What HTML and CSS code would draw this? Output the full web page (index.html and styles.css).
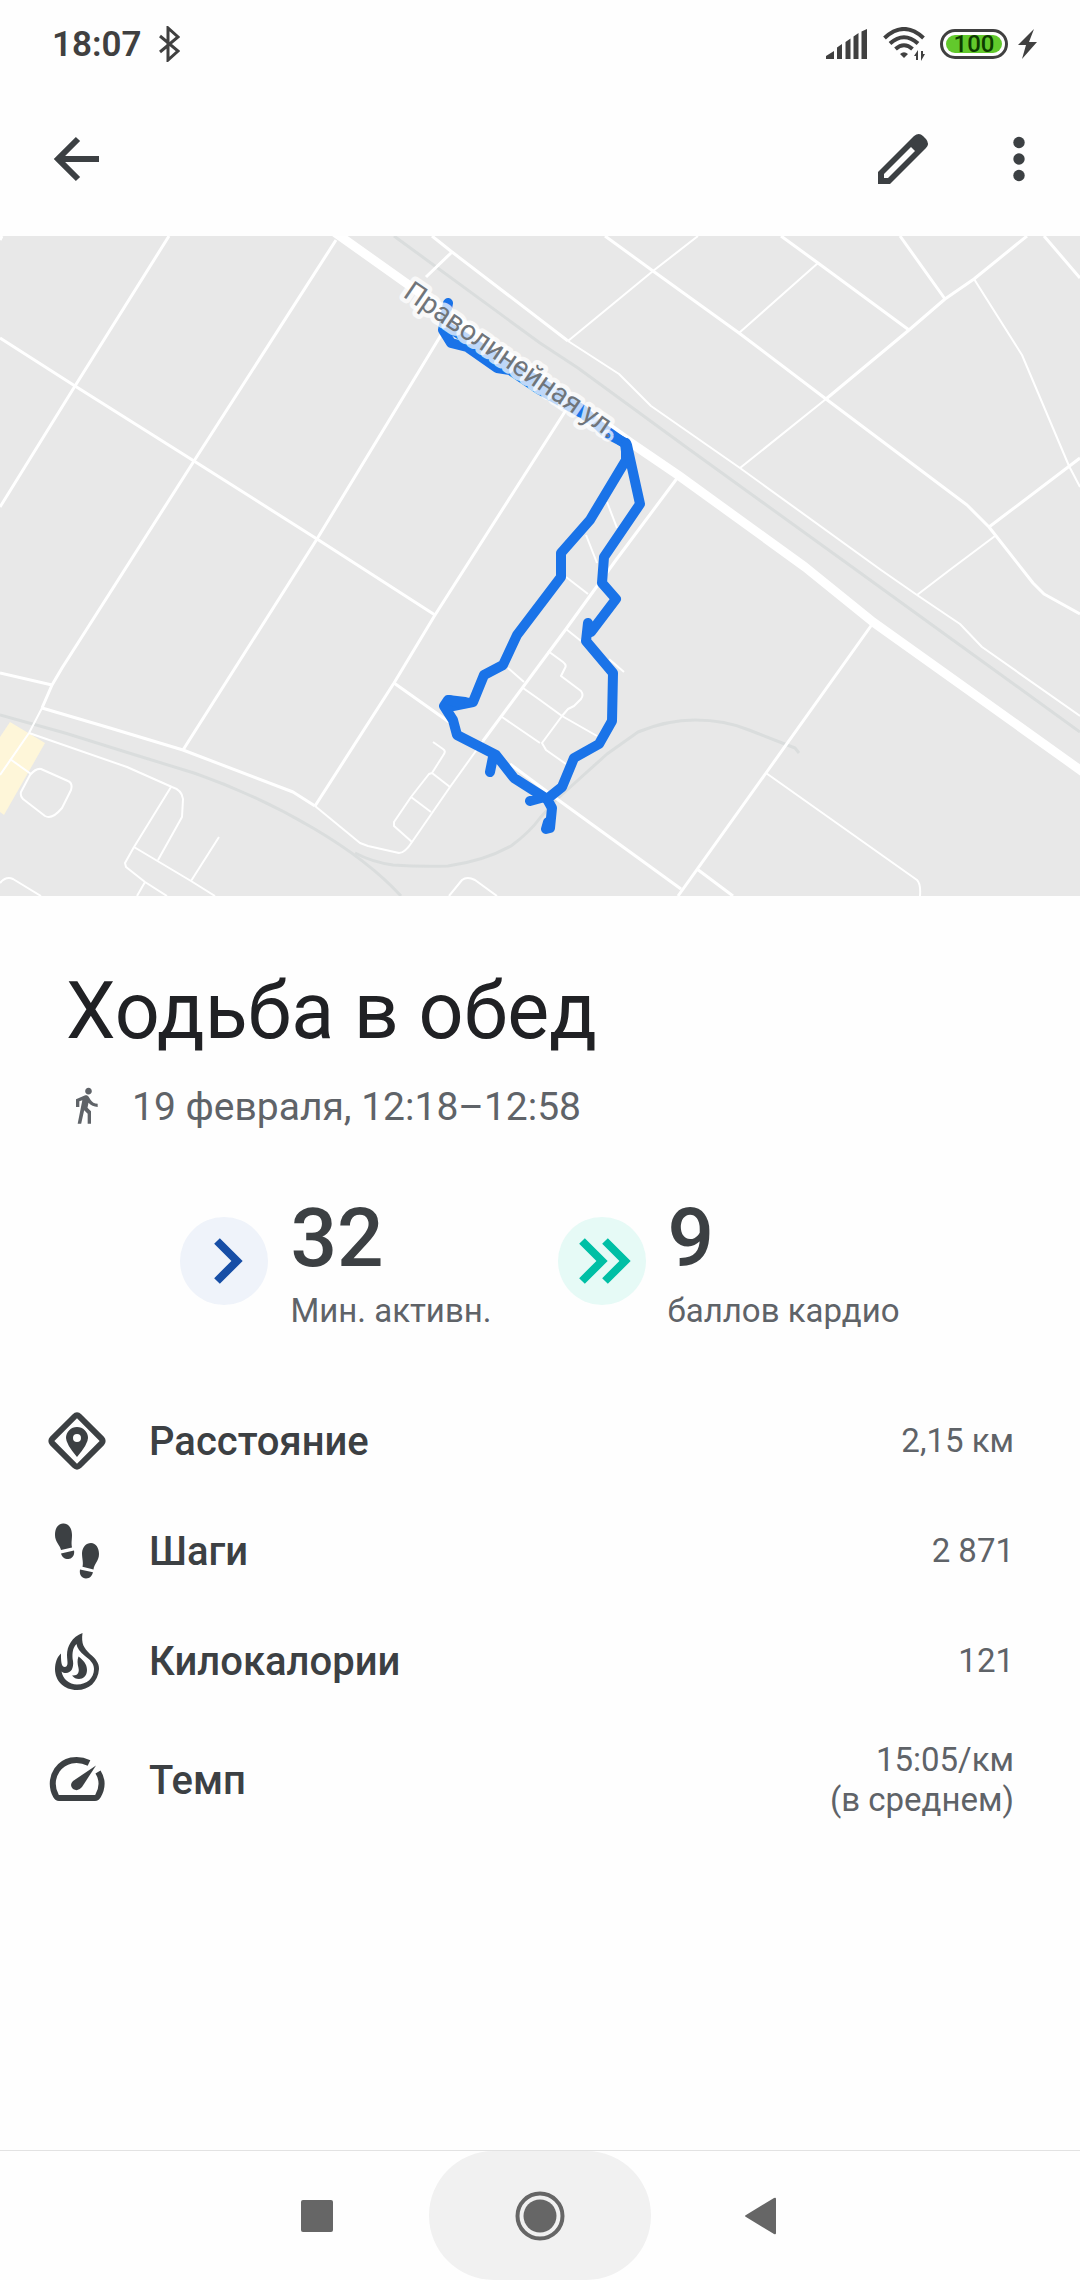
FILE: index.html
```html
<!DOCTYPE html>
<html lang="ru">
<head>
    <meta charset="utf-8">
    <meta name="viewport" content="width=device-width, initial-scale=1">
    <title>Ходьба в обед</title>
    <link rel="stylesheet" href="styles.css">
</head>
<body>
    <div class="status-bar">
        <div class="status-left">
            <span class="clock">18:07</span>
            <svg class="bluetooth" viewBox="0 0 22 36" aria-hidden="true"><path d="M2 10l18 15-10 9V2l10 9L2 26" /></svg>
        </div>
        <div class="status-right">
            <svg class="signal" viewBox="0 0 42 30" aria-hidden="true">
                <path d="M0 30v-3l8-5v8zM11 30V18.500l5-3.500v15zM19.500 30V13l5-3.500V30zM27.500 30V7.500l5-3.500v26zM35.500 30V2.500L41 0v30z" />
            </svg>
            <svg class="wifi" viewBox="0 0 42 34" aria-hidden="true">
                <path class="waves" d="M1.500 11Q21-7 40.500 11M7 16.500Q21 4 35 16.500M12.500 22Q21 14.500 29.500 22" />
                <path d="M17 27q4-3.500 8 0l-4 4zM35 23v10h-2v-4h-2zM38 34V24h2v3h2z" />
            </svg>
            <div class="battery"><span>100</span></div>
            <svg class="bolt" viewBox="0 0 20 30" aria-hidden="true"><path d="M16 0L0 16h8L4 30l15-17h-8z" /></svg>
        </div>
    </div>

    <header class="app-bar">
        <button class="icon-button" aria-label="Назад">
            <svg viewBox="0 0 66 66"><path class="line" d="M55 33H16M34 13L14 33l20 20" /></svg>
        </button>
        <div class="actions">
            <button class="icon-button" aria-label="Изменить">
                <svg viewBox="0 0 66 66"><path fill-rule="evenodd" d="M8 46L44 10q5-4 9 0l3 3q4 5 0 9L20 58H8zM14 48v4h4l27-27-4-4z" /></svg>
            </button>
            <button class="icon-button" aria-label="Ещё">
                <svg viewBox="0 0 66 66"><circle cx="33" cy="16.500" r="5.700" /><circle cx="33" cy="33" r="5.700" /><circle cx="33" cy="49.500" r="5.700" /></svg>
            </button>
        </div>
    </header>

    <svg class="map" viewBox="0 236 1080 660" role="img" aria-label="Маршрут на карте">
        <path class="area" d="M10 722L45 743 4 815l-4-3v-75z" />

        <!-- railways -->
        <path class="rail" d="M394 236L540 343 578 368 686 447 848 564 957 643 1080 732" />
        <path class="rail" d="M0 715L65 733 129 753 194 773Q257 795 313 828T401 896" />
        <path class="rail" d="M355 853Q372 862 393 865 420 867 448 866 484 861 511 846 530 832 540 818L557 799 607 754 638 732Q667 720 695 720 725 720 749 730L795 748 799 753" />

        <!-- lanes -->
        <path class="lane" d="M315 806L360 843 368 846 399 853Q405 853 412 842L450 787 483 741" />
        <path class="lane" d="M433 742L443 749Q446 751 444 754L432 773 429 774 411 797 394 822V826L412 842M432 773L450 787M411 797L431 812" />
        <path class="lane" d="M42 708L29 733 0 775M29 733L127 767 172 787Q182 790 183 799L182 817 158 860M171 787L134 847 125 863 126 867 145 882 167 896M134 847L191 881 215 896M191 881L219 837M145 882L137 896" />
        <path class="lane" d="M41 769L68 781Q73 783 71 790L62 808Q52 820 45 816L23 799Q20 796 21 792L30 775Q36 768 41 769zM10 759L31 774" />
        <path class="lane" d="M0 883Q6 876 13 879L41 896M449 896L462 880Q467 876 475 880L497 896" />
        <path class="lane" d="M548 651L563 662Q567 665 565 668L561 676 581 691Q584 695 581 699L574 706 568 709 562 716 542 743 546 750 566 764M523 688L540 700 562 716 597 736M502 717L540 743M508 668L524 682" />
        <path class="lane" d="M566 577L588 594M566 629L581 641M609 659L624 672M607 502L617 528M586 535L597 563" />
        <path class="lane" d="M698 236L653 271 568 341M818 263L739 333M826 399L740 468M995 536L951 569 917 595M974 279L1022 355 1069 466 1080 487" />
        <path class="lane" d="M766 773L917 880Q921 884 920 896M568 341L619 374 651 406 740 468 881 570 917 595 960 624 982 647 1080 716" />

        <!-- streets -->
        <path class="street" d="M2 236L0 240M169 236L75 386 0 507M336 240L194 461 62 668 52 685 42 708M441 335L317 539 183 750M566 410L435 615 394 683 315 806" />
        <path class="street" d="M0 338L75 386 194 461 317 539 435 615M0 673L52 685M42 708L110 728 183 750 293 792 315 806" />
        <path class="street" d="M678 477L616 560 566 629 483 741M394 683L449 722M510 764L557 799 681 889M873 623L766 773 678 896M697 869L733 896" />
        <path class="street" d="M605 236L653 271 739 333 826 399 967 505 989 527 1033 583 1044 594 1080 614M781 236L818 263 909 330" />
        <path class="street" d="M1027 236L974 279 945 299 909 330 826 399M900 236L945 299M1044 236L1080 278M1080 458L989 527" />
        <path class="street" d="M432 236L452 252 568 341M452 252L426 277" />
        <path class="avenue" d="M330 229L631 443 678 475 805 567 873 622 1090 777" />

        <!-- walked route -->
        <path class="route" d="M448 303L443 330 451 343 467 347 497 368 510 370 540 390 583 414 624 443" />
        <path class="route" d="M445 325L470 341 500 360 540 382 583 410 606 433 625 443 627 460" />
        <path class="route" d="M626 443V460L590 520 561 553V577L517 635 503 665 484 675 473 702 448 707M465 702L448 700 444 706 453 720 457 735 496 755 514 778 547 799M490 772L493 757M530 801L541 798" />
        <path class="route" d="M449 700L460 703" />
        <path class="route" d="M627 445L640 504 604 557 602 583 616 599 591 632M588 623L586 641 613 673 612 721 599 744 574 758 562 787 547 799 552 808 550 828 546 829 548 822" />

        <text class="street-name" transform="translate(402 296) rotate(34.500)">Праволинейная ул.</text>
    </svg>

    <main>
        <h1>Ходьба в обед</h1>
        <p class="date">
            <svg viewBox="0 1 24 24" aria-hidden="true"><path d="M13.500 5.500c1.100 0 2-.9 2-2s-.9-2-2-2-2 .9-2 2 .9 2 2 2zM9.800 8.900L7 23h2.100l1.800-8 2.100 2v6h2v-7.500l-2.100-2 .6-3C14.800 12 16.800 13 19 13v-2c-1.900 0-3.500-1-4.300-2.400l-1-1.600c-.4-.6-1-1-1.700-1-.3 0-.5.1-.8.1L6 8.300V13h2V9.600l1.800-.7" /></svg>
            19 февраля, 12:18–12:58
        </p>

        <div class="scores">
            <div class="score">
                <svg class="badge move" viewBox="0 0 88 88" aria-hidden="true"><circle cx="44" cy="44" r="44" /><path d="M37 24L57 44 37 64" /></svg>
                <div>
                    <div class="number">32</div>
                    <div class="caption">Мин. активн.</div>
                </div>
            </div>
            <div class="score">
                <svg class="badge cardio" viewBox="0 0 88 88" aria-hidden="true"><circle cx="44" cy="44" r="44" /><path d="M24 24L44 44 24 64M47 24L67 44 47 64" /></svg>
                <div>
                    <div class="number">9</div>
                    <div class="caption">баллов кардио</div>
                </div>
            </div>
        </div>

        <dl class="metrics">
            <div class="metric">
                <svg viewBox="0 0 66 66" aria-hidden="true">
                    <rect class="line" x="14" y="14" width="38" height="38" rx="3" transform="rotate(45 33 33)" />
                    <path fill-rule="evenodd" d="M33 49Q22 36 22 30A11 11 0 0 1 44 30Q44 36 33 49zM33 26a4 4 0 1 0 0 8 4 4 0 0 0 0-8z" />
                </svg>
                <dt>Расстояние</dt>
                <dd>2,15 км</dd>
            </div>
            <div class="metric">
                <svg viewBox="0 0 66 66" aria-hidden="true">
                    <path d="M19 5.500C25 5 28 11 28 17 28 22 27 25 28 29.500L17 32C16 27 11 24 11 17 11 10 14 6 19 5.500zM17 35.500L30 32.500C31 37 28 41 24.500 41 20 41 18 39 17 35.500z" />
                    <path d="M47 25C52 25 55 30 55 36 55 43 50 46 49.500 51.500L38.500 48.700C39.500 44 38 41 38 35 38.500 29 42 25 47 25zM36 51.500L49 54.300C48 58 46 60.500 42 60.500 38 60.500 35 57 36 51.500z" />
                </svg>
                <dt>Шаги</dt>
                <dd>2 871</dd>
            </div>
            <div class="metric">
                <svg viewBox="0 0 66 66" aria-hidden="true">
                    <path fill-rule="evenodd" d="M38.500 5C37 16 40 20 46 26 52 31 55 35 55 41 54 54 45 62 33 62 20 62 11 53 11 41 11 35 13 29 17 25.500 17 33 17 39 21 39 25 38 23 33 23 27 23 18 28 9 38.500 5zM32.500 16C28 20 28 28 29 33 30 40 27 45 22 45 20 45 19 44.500 17.500 43.500 19 51 25 56.500 33 56.500 43 56.500 50 50 50 41 50 35 45 31 41 28 36 24 33 20 32.500 16z" />
                    <path d="M34.500 28.500C39 32 43 36 43 42 43 48 39 51 35 51 32 51 30 50 28 47.500 34 48 35.500 44 34.500 40 33.500 36 33 32 34.500 28.500z" />
                </svg>
                <dt>Килокалории</dt>
                <dd>121</dd>
            </div>
            <div class="metric">
                <svg viewBox="0 0 66 66" aria-hidden="true">
                    <path class="line" d="M45 16C33 10 20 13 13 23 7 32 8 42 12 49Q13 51 15 51H51Q53 51 54 49C58 42 59 33 54 25" />
                    <path d="M52 18.500L38 40Q34 45 29 42 25 38 29 34z" />
                </svg>
                <dt>Темп</dt>
                <dd>15:05/км<br>(в среднем)</dd>
            </div>
        </dl>
    </main>

    <nav class="nav-bar">
        <button aria-label="Недавние"><svg viewBox="0 0 50 50"><rect x="8" y="9" width="32" height="32" rx="2" /></svg></button>
        <button class="pressed" aria-label="Домой"><svg viewBox="0 0 50 50"><circle class="ring" cx="25" cy="25" r="22.500" /><circle cx="25" cy="25" r="16.500" /></svg></button>
        <button aria-label="Назад"><svg viewBox="0 0 50 50"><path d="M9 24L37 7q2-1 2 1v34q0 2-2 1L9 26q-2-1 0-2z" /></svg></button>
    </nav>
</body>
</html>
```
FILE: styles.css
```css
* {
    box-sizing: border-box;
}

body {
    margin: 0;
    min-height: 100vh;
    display: flex;
    flex-direction: column;
    background: #fefefe;
    color: #3c4043;
    font-family: Roboto, "Noto Sans", sans-serif;
}

button {
    padding: 0;
    border: none;
    background: none;
    color: inherit;
    cursor: pointer;
}

svg {
    display: block;
    flex: none;
    fill: currentColor;
}

.line {
    fill: none;
    stroke: currentColor;
    stroke-width: 6;
}

/* status bar */
.status-bar {
    display: flex;
    justify-content: space-between;
    align-items: center;
    height: 88px;
    padding: 0 42px 0 52px;
    color: #404040;
}

.status-left,
.status-right {
    display: flex;
    align-items: center;
}

.status-left {
    gap: 16px;
}

.status-right {
    gap: 15px;
}

.clock {
    font-size: 35px;
    font-weight: 600;
}

.bluetooth {
    width: 22px;
    height: 36px;
    fill: none;
    stroke: currentColor;
    stroke-width: 3;
}

.signal {
    width: 42px;
    height: 30px;
}

.wifi {
    width: 42px;
    height: 34px;
}

.waves {
    fill: none;
    stroke: currentColor;
    stroke-width: 4;
}

.battery {
    width: 68px;
    height: 30px;
    padding: 3px;
    border: 3px solid #404040;
    border-radius: 15px;
}

.battery span {
    display: block;
    border-radius: 9px;
    background: #62c92c;
    color: #0d3b00;
    font-size: 24px;
    font-weight: 500;
    line-height: 18px;
    text-align: center;
}

.bolt {
    width: 20px;
    height: 30px;
    margin-left: -5px;
}

/* app bar */
.app-bar {
    display: flex;
    justify-content: space-between;
    height: 148px;
    padding: 38px 28px 0 44px;
}

.actions {
    display: flex;
    gap: 50px;
}

.icon-button,
.icon-button svg {
    width: 66px;
    height: 66px;
}

/* map */
.map {
    width: 100%;
    height: auto;
    background: #e8e8e8;
}

.map path {
    fill: none;
    stroke-linejoin: round;
}

.map .area {
    fill: #fef6d9;
}

.rail {
    stroke: #dadddd;
    stroke-width: 3;
}

.lane {
    stroke: #fff;
    stroke-width: 2;
}

.street {
    stroke: #fff;
    stroke-width: 3;
}

.avenue {
    stroke: #fff;
    stroke-width: 9;
}

.route {
    stroke: #1a73e8;
    stroke-width: 10;
    stroke-linecap: round;
}

.street-name {
    fill: #70757a;
    stroke: rgba(255, 255, 255, 0.72);
    stroke-width: 9;
    stroke-linejoin: round;
    paint-order: stroke;
    font-size: 28px;
}

/* session */
h1 {
    margin: 68px 66px 0;
    color: #202124;
    font-size: 79px;
    font-weight: 400;
    line-height: 94px;
}

.date {
    display: flex;
    align-items: center;
    gap: 26px;
    margin: 26px 66px 0;
    color: #5f6368;
    font-size: 39px;
    line-height: 46px;
}

.date svg {
    width: 40px;
    height: 40px;
}

.scores {
    display: flex;
    justify-content: center;
    gap: 66px;
    margin-top: 58px;
}

.score {
    display: flex;
    align-items: center;
    gap: 22px;
}

.badge {
    width: 88px;
    height: 88px;
}

.badge path {
    fill: none;
    stroke-width: 8;
}

.move circle {
    fill: #eff3fa;
}

.move path {
    stroke: #174ea6;
}

.cardio circle {
    fill: #e6faf6;
}

.cardio path {
    stroke: #00bfa5;
}

.number {
    font-size: 82px;
    font-weight: 500;
    line-height: 100px;
}

.caption {
    color: #5f6368;
    font-size: 33px;
    line-height: 46px;
}

.metrics {
    margin: 52px 66px 0 44px;
}

.metric {
    display: flex;
    align-items: center;
    padding: 22px 0;
}

.metric:last-child {
    padding: 24px 0;
}

.metric svg {
    width: 66px;
    height: 66px;
    margin-right: 39px;
}

dt {
    font-size: 40px;
    font-weight: 500;
}

dd {
    margin: 0 0 0 auto;
    color: #5f6368;
    font-size: 33px;
    line-height: 40px;
    text-align: right;
}

/* system navigation */
.nav-bar {
    display: flex;
    justify-content: center;
    height: 130px;
    margin-top: auto;
    border-top: 1px solid #e2e2e2;
    color: #666;
}

.nav-bar button {
    display: flex;
    align-items: center;
    justify-content: center;
    width: 222px;
    border-radius: 65px;
}

.nav-bar .pressed {
    background: #f1f1f1;
}

.nav-bar svg {
    width: 50px;
    height: 50px;
}

.ring {
    fill: none;
    stroke: currentColor;
    stroke-width: 4;
}
```
